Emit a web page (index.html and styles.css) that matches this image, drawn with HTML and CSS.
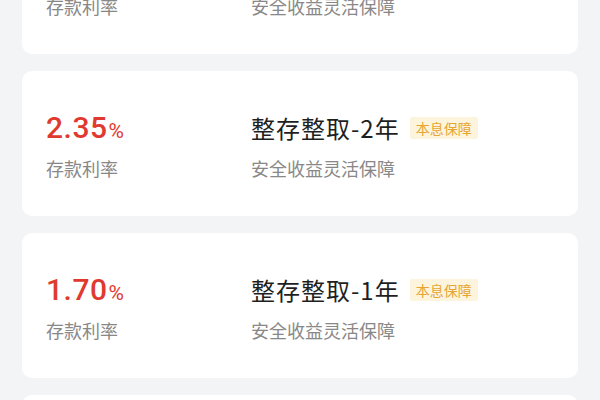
FILE: index.html
```html
<!DOCTYPE html>
<html lang="zh-CN">
<head>
<meta charset="utf-8">
<link rel="stylesheet" href="styles.css">
</head>
<body>
<div class="list">
  <div class="card">
    <div class="left">
      <div class="rate">2.75<span class="pct">%</span></div>
      <div class="label">存款利率</div>
    </div>
    <div class="right">
      <div class="title">整存整取-3年<span class="badge">本息保障</span></div>
      <div class="sub">安全收益灵活保障</div>
    </div>
  </div>
  <div class="card">
    <div class="left">
      <div class="rate">2.35<span class="pct">%</span></div>
      <div class="label">存款利率</div>
    </div>
    <div class="right">
      <div class="title">整存整取-2年<span class="badge">本息保障</span></div>
      <div class="sub">安全收益灵活保障</div>
    </div>
  </div>
  <div class="card">
    <div class="left">
      <div class="rate">1.70<span class="pct">%</span></div>
      <div class="label">存款利率</div>
    </div>
    <div class="right">
      <div class="title">整存整取-1年<span class="badge">本息保障</span></div>
      <div class="sub">安全收益灵活保障</div>
    </div>
  </div>
  <div class="card">
    <div class="left">
      <div class="rate">1.45<span class="pct">%</span></div>
      <div class="label">存款利率</div>
    </div>
    <div class="right">
      <div class="title">整存整取-6个月<span class="badge">本息保障</span></div>
      <div class="sub">安全收益灵活保障</div>
    </div>
  </div>
</div>
</body>
</html>
```

FILE: styles.css
```css
html, body {
  margin: 0;
  padding: 0;
  background: #f3f4f6;
  font-family: "Noto Sans CJK SC", "Noto Sans", sans-serif;
  overflow: hidden;
}
.list {
  display: flex;
  flex-direction: column;
  gap: 17px;
  padding: 0 22px;
  margin-top: -91px;
}
.card {
  height: 145px;
  box-sizing: border-box;
  background: #ffffff;
  border-radius: 10px;
  display: flex;
  padding: 41px 0 0 24px;
}
.left {
  width: 205px;
  display: flex;
  flex-direction: column;
}
.right {
  display: flex;
  flex-direction: column;
}
.rate {
  height: 32px;
  line-height: 32px;
  font-family: Roboto, "Noto Sans", sans-serif;
  font-size: 30px;
  font-weight: 500;
  color: #e03a30;
  letter-spacing: 0.5px;
}
.pct {
  font-size: 21px;
  font-weight: 400;
  margin-left: 1px;
}
.label, .sub {
  margin-top: 12px;
  height: 24px;
  line-height: 24px;
  font-size: 18px;
  color: #888888;
}
.title {
  height: 32px;
  line-height: 32px;
  font-size: 24px;
  font-weight: 400;
  color: #1f1f1f;
  letter-spacing: 1px;
  display: flex;
  align-items: center;
}
.badge {
  margin-left: 10px;
  height: 22px;
  line-height: 22px;
  padding: 0 6px;
  background: #fdf4de;
  color: #e6a532;
  font-size: 14px;
  font-weight: 400;
  letter-spacing: 0;
  border-radius: 2px;
}
```
